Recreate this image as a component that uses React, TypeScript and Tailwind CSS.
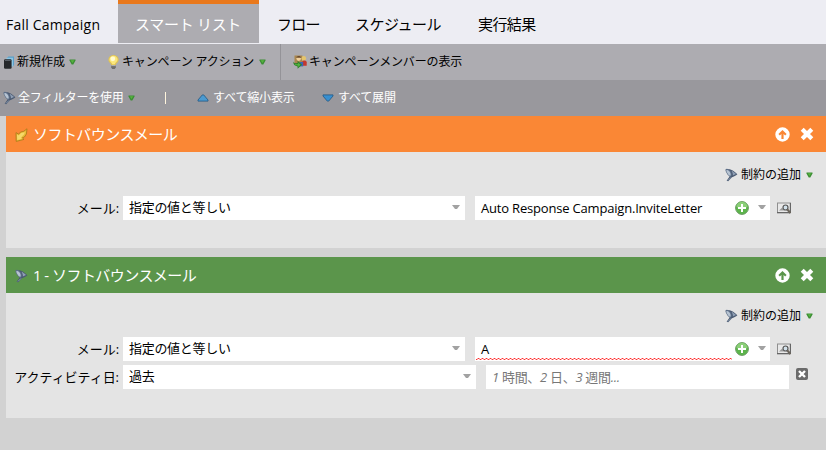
import type { ReactNode } from 'react';

function Caret({ className = '' }: { className?: string }) {
  return (
    <svg className={`block h-[6px] w-[7px] shrink-0 ${className}`} viewBox="0 0 7 6">
      <path d="M0.5 0.5h6v1L4.3 5.4H2.7L0.5 1.5z" fill="#3c8d34" />
      <path d="M1.7 1.2h3.6L3.5 4z" fill="#56b53f" />
    </svg>
  );
}

function GrayCaret({ className = '' }: { className?: string }) {
  return (
    <svg className={`block h-[4px] w-[8px] shrink-0 ${className}`} viewBox="0 0 8 4">
      <path d="M0 0h8L5 4H3z" fill="#a2a2a2" />
    </svg>
  );
}

function Funnel({ className = '' }: { className?: string }) {
  return (
    <svg className={`block h-[14px] w-[13px] shrink-0 ${className}`} viewBox="0 0 13 14">
      <path d="M3.2 1C6 1.2 9.6 3.4 12.4 6.2 11 7.8 8.6 8.4 7 9.2L3.2 13.2 1.6 12.8 4.6 8.4z" fill="#4b5a72" />
      <path d="M0.5 1.4C1.8 0 4.6 1.4 6 3.8 7.2 6 7 8.4 5.8 8.8 4.4 9 2.6 7 1.6 5 .8 3.4.2 2 .5 1.4z" fill="#5d6f88" />
      <path d="M1.4 2.2C2.4 1.4 4.3 2.6 5.2 4.4 6 6 5.8 7.6 5.2 7.8 4.2 7.8 3 6.4 2.3 5 1.6 3.8 1.1 2.6 1.4 2.2z" fill="#b6c3d2" />
      <path d="M6.4 2.8C8 3.4 9.8 4.8 11 6L7.8 7.6C8 6 7.6 4.4 6.4 2.8z" fill="#90a0b6" />
      <path d="M6 9.4L3 12.4" stroke="#8fa0b4" strokeWidth=".9" />
    </svg>
  );
}

function Pages() {
  return (
    <svg className="ml-[4px] block h-[13px] w-[10px] shrink-0" viewBox="0 0 10 13">
      <path d="M3 2l1.4-1.6H10V9L8.2 11V2z" fill="#5b9fc9" />
      <path d="M2 3L3 1.8h6V10L8 11z" fill="#8cc6e4" />
      <rect y="3.2" width="7.6" height="9.6" rx="1.2" fill="#25282b" />
      <path d="M1 5V4h5.6v1z" fill="#596067" />
    </svg>
  );
}

function Bulb() {
  return (
    <svg className="block h-[14px] w-[11px] shrink-0" viewBox="0 0 11 14">
      <path d="M3.2 9h4.6v3.2L6.8 14H4.2l-1-1.8z" fill="#6d6d6d" />
      <path d="M3.3 10.6h4.4" stroke="#c9c9c9" strokeWidth=".8" />
      <path d="M5.5 0a5 5 0 0 1 5.2 4.9C10.7 7 8 8.1 7.8 10H3.2C3 8.1.3 7 .3 4.9A5 5 0 0 1 5.5 0z" fill="#dfc356" />
      <path d="M5.5.8a4 4 0 0 1 4.1 4C9.6 6.4 7 7.6 6.8 9.2H4.2C4 7.6 1.4 6.4 1.4 4.8a4 4 0 0 1 4.1-4z" fill="#fbe77c" />
      <circle cx="4.8" cy="3.8" r="2.4" fill="#fffbd2" />
    </svg>
  );
}

function Members() {
  return (
    <svg className="block h-[14px] w-[14px] shrink-0" viewBox="0 0 14 14">
      <rect x="1.5" y="0.5" width="8" height="8" fill="#a9864f" />
      <circle cx="5.7" cy="3.6" r="2.3" fill="#f0cf9a" />
      <path d="M3.2 2.8C3.6.4 8 .4 8.2 2.8z" fill="#6a4a2b" />
      <circle cx="10.8" cy="3.4" r="2.3" fill="#e5c46b" />
      <path d="M9 7.2c0-2.4 4.7-2.4 4.7 0v3.6H9z" fill="#c4372e" />
      <path d="M6.6 7h3.6v4.4H6.6z" fill="#3a67b4" />
      <path d="M0.2 6.6C.8 8 2 8.4 4.6 8V5.8L9 9.8l-4.4 4v-2.4C1.8 11.2.2 9.4.2 6.6z" fill="#2e8128" />
      <path d="M1.2 8.6c1 .8 2.2.8 4 .4V7.8l2.3 2L5.2 12v-1.5c-2 .1-3.2-.5-4-1.9z" fill="#55b741" />
    </svg>
  );
}

function BlueTriangle({ down = false }: { down?: boolean }) {
  return (
    <svg className={`block h-[8px] w-[12px] shrink-0 ${down ? 'rotate-180' : ''}`} viewBox="0 0 12 8">
      <path d="M5.3.9h1.4L11 6v1.1H1V6z" fill={down ? '#388fd0' : '#4b9ad0'} stroke="#285f8a" strokeWidth=".9" />
    </svg>
  );
}

function GoldArrow() {
  return (
    <svg className="ml-[9px] mt-[2px] block h-[14px] w-[13px] shrink-0" viewBox="0 0 13 14">
      <path d="M1 4.6l2.6 1.6L5.6 4 8.6 3.4 12 .8 11.4 6 9.4 9 7.4 9.8 9 11.4 1.2 13.4z" fill="#e8bd37" stroke="#b17c1c" strokeWidth=".9" />
      <path d="M2 6.6l1.8 1L6.2 5l3.6-.8-.8 2.4L6 9.6l.8 1.2-4.6 1.2z" fill="#f6d869" />
    </svg>
  );
}

function HeaderActions() {
  return (
    <div className="ml-auto mr-[12px] flex items-center gap-[10px]">
      <svg className="block h-[15px] w-[15px]" viewBox="0 0 15 15">
        <path fillRule="evenodd" fill="#fff" d="M7.5.3a7.2 7.2 0 1 1 0 14.4 7.2 7.2 0 0 1 0-14.4zM7.5 2.9L3.4 7l1.5 1.5 1.5-1.5V12h2.2V7l1.5 1.5L11.6 7z" />
      </svg>
      <svg className="block h-[14px] w-[14px]" viewBox="0 0 14 14">
        <path d="M2.2 2.2l9.6 9.6M11.8 2.2l-9.6 9.6" stroke="#fff" strokeWidth="4.2" />
      </svg>
    </div>
  );
}

function Plus() {
  return (
    <svg className="block h-[14px] w-[14px] shrink-0" viewBox="0 0 14 14">
      <circle cx="7" cy="7" r="6.4" fill="#5cb54b" stroke="#6a9a62" strokeWidth="1" />
      <path d="M1.5 6a5.5 5.2 0 0 1 11 0c-3 1.5-8 1.5-11 0z" fill="#8bcf78" />
      <path d="M7 3v8M3 7h8" stroke="#fff" strokeWidth="2" />
    </svg>
  );
}

function Preview() {
  return (
    <svg className="ml-[7px] block h-[12px] w-[14px] shrink-0" viewBox="0 0 14 12">
      <rect x=".5" y="1" width="13" height="9.6" fill="#e8e8e8" stroke="#8f8f8f" />
      <path d="M0 10.6h13.5M13.4 1v10" stroke="#666" strokeWidth="1.2" />
      <path d="M2 8.4l3-2.6 2 2.6z" fill="#999" />
      <circle cx="8.5" cy="5.5" r="2.5" fill="#d2e1ea" stroke="#555" strokeWidth="1.2" />
      <path d="M10.3 7.4l3 3.6" stroke="#6b655c" strokeWidth="2.2" />
    </svg>
  );
}

function AddConstraint() {
  return (
    <div className="flex h-[44px] items-center justify-end pr-[13px]">
      <Funnel className="mt-px" />
      <span className="ml-[3px] w-[60px] pt-px text-[12px]">制約の追加</span>
      <Caret className="ml-[5px] mt-px" />
    </div>
  );
}

function Label({ children }: { children: ReactNode }) {
  return <span className="w-[113px] shrink-0 text-right text-[13px] tracking-[-0.05px]">{children}</span>;
}

function Operator({ children, wide = false }: { children: ReactNode; wide?: boolean }) {
  return (
    <div className={`ml-[4px] flex h-[24px] shrink-0 items-center bg-white pl-[6px] pr-[5px] ${wide ? 'w-[353px]' : 'w-[342px]'}`}>
      <span className="relative -top-px text-[13px] tracking-[-0.3px]">{children}</span>
      <GrayCaret className="-mt-[2px] ml-auto" />
    </div>
  );
}

function MailRow({ value, invalid = false }: { value: string; invalid?: boolean }) {
  return (
    <div className="flex h-[24px] items-center">
      <Label>メール:</Label>
      <Operator>指定の値と等しい</Operator>
      <div className="relative ml-[10px] flex h-[24px] w-[295px] shrink-0 items-center bg-white pl-[6px] pr-[4px]">
        <span className="text-[13px] tracking-[-0.19px]">{value}</span>
        <div className="ml-auto flex items-center">
          <Plus />
          <GrayCaret className="-mt-[2px] ml-[9px]" />
        </div>
        {invalid && (
          <svg className="absolute bottom-[1px] left-[1px] h-[2px] w-[256px]" viewBox="0 0 256 2" shapeRendering="crispEdges">
            <defs>
              <pattern id="wave" width="4" height="2" patternUnits="userSpaceOnUse">
                <path d="M0 1h1v1H0zM2 0h1v1H2z" fill="#ff3030" />
                <path d="M1 0h1v2H1zM3 0h1v2H3z" fill="#ffa8a8" />
              </pattern>
            </defs>
            <rect width="256" height="2" fill="url(#wave)" />
          </svg>
        )}
      </div>
      <Preview />
    </div>
  );
}

function Header({ color, icon, children }: { color: string; icon: ReactNode; children: ReactNode }) {
  return (
    <div className={`flex h-[36px] items-center text-[15px] text-white ${color}`}>
      {icon}
      <span className="ml-[5px] tracking-[-0.55px]">{children}</span>
      <HeaderActions />
    </div>
  );
}

export default function App() {
  return (
    <div className="h-[450px] w-[826px] overflow-hidden bg-[#d2d2d2] font-['Open_Sans','Noto_Sans_CJK_JP',sans-serif] text-[13px] leading-none whitespace-nowrap text-black">
      <nav className="flex h-[44px] bg-[#ededf3] pt-[4px] text-[15px]">
        <span className="w-[118px] pl-[6px] pt-[14px] text-[14px] tracking-[0.22px]">Fall Campaign</span>
        <div className="-mt-[4px] h-[43px] w-[141px] border-t-4 border-[#e9781b] bg-[#adacb1] pl-[17px] pt-[13px] text-white">
          <span className="tracking-[-0.3px]">スマート リスト</span>
        </div>
        <span className="ml-[18px] w-[78px] pt-[13px] tracking-[-0.8px]">フロー</span>
        <span className="w-[123px] pt-[13px] tracking-[-0.5px]">スケジュール</span>
        <span className="pt-[13px] tracking-[-0.6px]">実行結果</span>
      </nav>
      <div className="flex h-[36px] items-center bg-[#adacb1] text-[12px]">
        <Pages />
        <span className="ml-[3px] w-[49px]">新規作成</span>
        <Caret className="ml-[3px]" />
        <span className="ml-[32px]"><Bulb /></span>
        <span className="ml-[3px] w-[134px] tracking-[-0.15px]">キャンペーン アクション</span>
        <Caret className="ml-[3px]" />
        <div className="ml-[14px] h-full w-px bg-[#949398]" />
        <span className="ml-[12px]"><Members /></span>
        <span className="ml-[2px] tracking-[-0.15px]">キャンペーンメンバーの表示</span>
      </div>
      <div className="flex h-[36px] items-center bg-[#99989d] text-[12px] text-white">
        <Funnel className="ml-[3px]" />
        <span className="ml-[2px] w-[106px] tracking-[-0.25px]">全フィルターを使用</span>
        <Caret className="ml-[4px]" />
        <div className="ml-[30px] h-[12px] w-px bg-[#fff5dd]" />
        <span className="ml-[31px]"><BlueTriangle /></span>
        <span className="ml-[4px] w-[83px] tracking-[-0.15px]">すべて縮小表示</span>
        <span className="ml-[26px]"><BlueTriangle down /></span>
        <span className="ml-[4px] tracking-[-0.2px]">すべて展開</span>
      </div>
      <main className="flex flex-col gap-[9px] pl-[6px]">
        <section className="h-[132px] bg-[#e4e4e4]">
          <Header color="bg-[#fa8735]" icon={<GoldArrow />}>ソフトバウンスメール</Header>
          <AddConstraint />
          <MailRow value="Auto Response Campaign.InviteLetter" />
        </section>
        <section className="h-[161px] bg-[#e4e4e4]">
          <Header color="bg-[#5b954b]" icon={<Funnel className="ml-[9px] mt-[2px]" />}>1 - ソフトバウンスメール</Header>
          <AddConstraint />
          <MailRow value="A" invalid />
          <div className="mt-[4px] flex h-[24px] items-center">
            <Label>アクティビティ日:</Label>
            <Operator wide>過去</Operator>
            <div className="ml-[10px] flex h-[24px] w-[303px] shrink-0 items-center bg-white pl-[6px] text-[13px] text-[#777]">
              <span className="tracking-[-0.3px]">
                <i>1</i> 時間、<i>2</i> 日、<i>3</i> 週間<i>...</i>
              </span>
            </div>
            <svg className="-mt-[6px] ml-[7px] block h-[12px] w-[12px]" viewBox="0 0 12 12">
              <rect width="12" height="12" rx="2" fill="#6b6b6b" />
              <path d="M3 3l6 6M9 3L3 9" stroke="#fff" strokeWidth="2.4" />
            </svg>
          </div>
        </section>
      </main>
    </div>
  );
}
